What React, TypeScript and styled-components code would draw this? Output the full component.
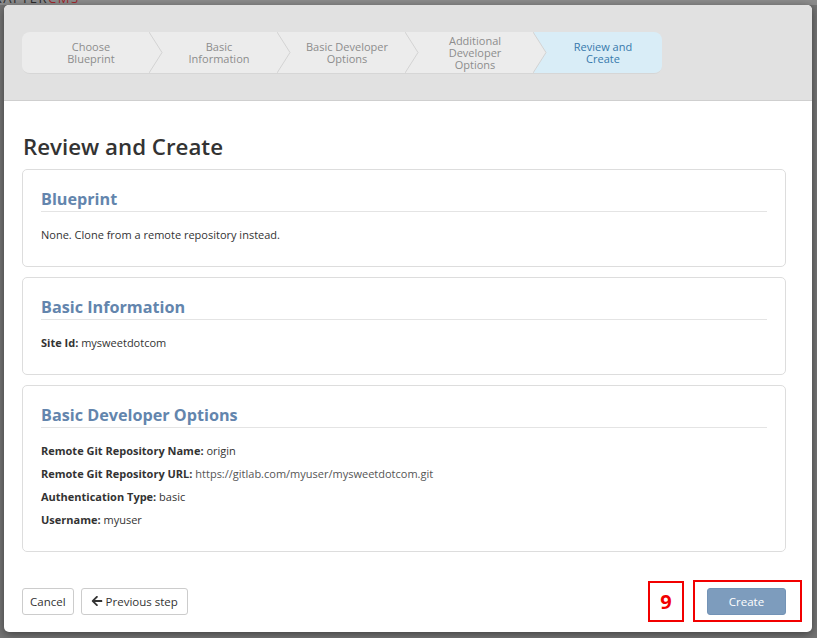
import React, {FC} from "react";
import styled, {createGlobalStyle} from "styled-components";

const GlobalStyle = createGlobalStyle`
  html, body {
    margin: 0;
    padding: 0;
    background: #747474;
  }
  body {
    font-family: "Open Sans", "Liberation Sans", sans-serif;
    color: #333;
    overflow: hidden;
  }
`

const Page = styled.div`
  width: 817px;
  height: 638px;
  overflow: hidden;
  display: flex;
  flex-direction: column;
`
const BackdropBar = styled.div`
  height: 5px;
  overflow: hidden;
  background: #8c8c8c;
  display: flex;
  justify-content: space-between;
`
const Logo = styled.div`
  margin-top: -10px;
  margin-left: -16px;
  font-size: 13px;
  line-height: 16px;
  letter-spacing: 1.5px;
  color: #2b2b2b;

  span {
    color: #a3262c;
  }
`
const Modal = styled.div`
  margin-left: 4px;
  width: 808px;
  height: 627px;
  background: #fff;
  border-radius: 5px;
  box-shadow: 0 2px 8px rgba(0, 0, 0, 0.45);
  display: flex;
  flex-direction: column;
  overflow: hidden;
`
const Header = styled.div`
  height: 96px;
  background: #e1e1e1;
  border-bottom: 1px solid #cfcfcf;
  padding: 27px 0 0 18px;
  box-sizing: border-box;
`
const Steps = styled.ol`
  display: flex;
  margin: 0;
  padding: 0;
  list-style: none;
  width: 640px;
  height: 41px;
  border-radius: 8px;
  overflow: hidden;
  border-bottom: 1px solid #d6d6d6;
`
const Step = styled.li<{ $active?: boolean }>`
  position: relative;
  flex: 1;
  display: flex;
  align-items: center;
  justify-content: center;
  text-align: center;
  padding: 0 12px 0 22px;
  font-size: 11px;
  line-height: 12px;
  color: ${p => p.$active ? '#3779ac' : '#8d8d8d'};
  background: ${p => p.$active ? '#d9edf7' : '#ececec'};
`
const StepLabel = styled.span`
  max-width: 84px;
`
const Chevron = styled.svg`
  position: absolute;
  top: 0;
  right: -13px;
  z-index: 1;
`
const Body = styled.div`
  flex: 1;
  padding: 0 26px 0 18px;
  display: flex;
  flex-direction: column;
`
const Title = styled.h1`
  margin: 31px 0 7px 1px;
  font-size: 22.3px;
  line-height: 30px;
  font-weight: 600;
  color: #333;
`
const Card = styled.section<{ $tall?: boolean }>`
  border: 1px solid #dddddd;
  border-radius: 5px;
  padding: 17px 18px 0;
  height: ${p => p.$tall ? 167 : 98}px;
  box-sizing: border-box;
  margin-bottom: 10px;
`
const CardTitle = styled.h2`
  margin: 0;
  font-size: 16.2px;
  line-height: 24px;
  font-weight: 700;
  color: #6385ad;
  border-bottom: 1px solid #e4e4e4;
`
const Fields = styled.div`
  padding-top: 14px;
  display: flex;
  flex-direction: column;
  gap: 6px;
`
const Field = styled.div`
  font-size: 11px;
  line-height: 17px;
  color: #333;

  b {
    font-weight: 700;
  }
`
const Muted = styled.span`
  color: #555;
`
const Footer = styled.div`
  height: 58px;
  padding: 0 10px 2px 18px;
  display: flex;
  align-items: center;
  gap: 7px;
`
const Button = styled.button<{ $pad?: number }>`
  height: 27px;
  padding: 0 ${p => p.$pad ?? 9}px;
  font-family: "Open Sans", "Liberation Sans", sans-serif;
  font-size: 11.5px;
  color: #333;
  background: #fff;
  border: 1px solid #cccccc;
  border-radius: 3px;
  display: flex;
  align-items: center;
  gap: 3px;
`
const Spacer = styled.div`
  flex: 1;
`
const Callout = styled.div`
  width: 36px;
  height: 41px;
  box-sizing: border-box;
  border: 2px solid #f20000;
  color: #f20000;
  font-size: 20px;
  font-weight: 700;
  display: flex;
  align-items: center;
  justify-content: center;
  margin-right: 2px;
`
const Highlight = styled.div`
  width: 109px;
  height: 42px;
  box-sizing: border-box;
  border: 2px solid #f20000;
  display: flex;
  align-items: center;
  padding-left: 12px;
`
const PrimaryButton = styled.button`
  width: 79px;
  height: 27px;
  font-family: "Open Sans", "Liberation Sans", sans-serif;
  font-size: 11.5px;
  color: #fff;
  background: #7d9cbd;
  border: 1px solid #7393b6;
  border-radius: 3px;
`

const steps = [
  'Choose Blueprint',
  'Basic Information',
  'Basic Developer Options',
  'Additional Developer Options',
  'Review and Create',
]

const ArrowLeft: FC = () => (
  <svg width="12" height="12" viewBox="0 0 448 512">
    <path fill="#333"
          d="M257.5 445.1l-22.2 22.2c-9.4 9.4-24.6 9.4-33.9 0L7 273c-9.4-9.4-9.4-24.6 0-33.9L201.4 44.7c9.4-9.4 24.6-9.4 33.9 0l22.2 22.2c9.5 9.5 9.3 25-.4 34.3L136.6 216H424c13.3 0 24 10.700 24 24v32c0 13.3-10.7 24-24 24H136.6l120.5 114.8c9.8 9.3 10 24.8.4 34.3z"/>
  </svg>
)

const App: FC = () => {
  return (
    <Page>
      <GlobalStyle/>
      <BackdropBar>
        <Logo>CRAFTER<span>CMS</span></Logo>
      </BackdropBar>
      <Modal>
        <Header>
          <Steps>
            {steps.map((s, i) => (
              <Step key={s} $active={i === steps.length - 1}>
                <StepLabel>{s}</StepLabel>
                {i < steps.length - 1 &&
                  <Chevron width="14" height="41" viewBox="0 0 14 41">
                    <polygon points="0,0 13,20.5 0,41" fill="#ececec"/>
                    <polyline points="0,0 13,20.5 0,41" fill="none" stroke="#d3d3d3" strokeWidth="1"/>
                  </Chevron>}
              </Step>
            ))}
          </Steps>
        </Header>
        <Body>
          <Title>Review and Create</Title>
          <Card>
            <CardTitle>Blueprint</CardTitle>
            <Fields>
              <Field>None. Clone from a remote repository instead.</Field>
            </Fields>
          </Card>
          <Card>
            <CardTitle>Basic Information</CardTitle>
            <Fields>
              <Field><b>Site Id:</b> mysweetdotcom</Field>
            </Fields>
          </Card>
          <Card $tall>
            <CardTitle>Basic Developer Options</CardTitle>
            <Fields>
              <Field><b>Remote Git Repository Name:</b> origin</Field>
              <Field><b>Remote Git Repository URL:</b> <Muted>https://gitlab.com/myuser/mysweetdotcom.git</Muted></Field>
              <Field><b>Authentication Type:</b> basic</Field>
              <Field><b>Username:</b> myuser</Field>
            </Fields>
          </Card>
        </Body>
        <Footer>
          <Button $pad={7}>Cancel</Button>
          <Button><ArrowLeft/>Previous step</Button>
          <Spacer/>
          <Callout>9</Callout>
          <Highlight>
            <PrimaryButton>Create</PrimaryButton>
          </Highlight>
        </Footer>
      </Modal>
    </Page>
  )
}

export default App
